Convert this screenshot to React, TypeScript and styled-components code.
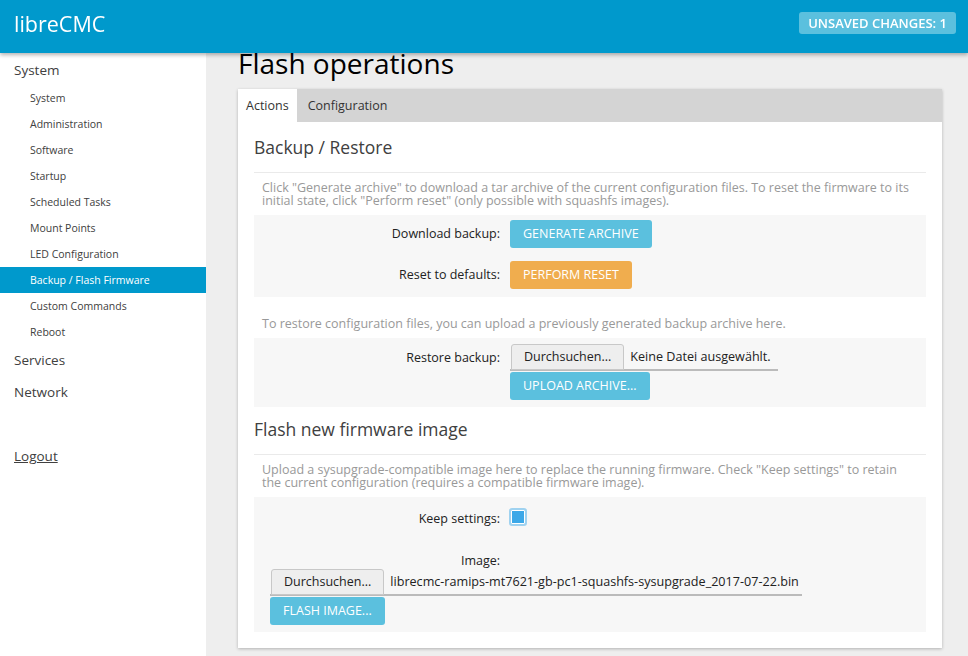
import React from "react";
import styled, { createGlobalStyle } from "styled-components";

const GlobalStyle = createGlobalStyle`
  html, body { margin: 0; padding: 0; background: #eeeeee; }
  body { font-family: "Open Sans", "Liberation Sans", sans-serif; color: #404040; }
  * { box-sizing: border-box; }
`;

const Header = styled.header`
  position: fixed;
  top: 0; left: 0; right: 0;
  height: 53px;
  background: #0099cc;
  box-shadow: 0 2px 4px rgba(0,0,0,0.3);
  display: flex;
  align-items: flex-start;
  justify-content: space-between;
  padding: 0 12px 0 14px;
  z-index: 10;
`;

const Brand = styled.div`
  color: #fff;
  font-size: 21.5px;
  line-height: 47px;
`;

const Badge = styled.div`
  background: #5bc0de;
  color: #fff;
  font-weight: 600;
  font-size: 13px;
  border-radius: 3px;
  height: 22px;
  line-height: 22px;
  padding: 0 9px;
  margin-top: 12px;
  font-stretch: 90%;
`;

const Shell = styled.div`
  display: flex;
  min-height: 656px;
`;

const Sidebar = styled.nav`
  width: 206px;
  flex: none;
  background: #fff;
  padding-top: 58px;
`;

const TopItem = styled.div<{ $gap?: number }>`
  font-size: 13.5px;
  color: #404040;
  padding-left: 14px;
  height: 32px;
  line-height: 24px;
  margin-top: ${(p) => p.$gap ?? 0}px;
  text-decoration: ${(p) => (p.$gap ? "underline" : "none")};
`;

const SubList = styled.div`
  margin-top: -5px;
  margin-bottom: 3px;
`;

const SubItem = styled.div<{ $active?: boolean }>`
  font-size: 10.5px;
  height: 26px;
  line-height: 26px;
  padding-left: 30px;
  color: ${(p) => (p.$active ? "#fff" : "#404040")};
  background: ${(p) => (p.$active ? "#0099cc" : "transparent")};
`;

const Main = styled.main`
  flex: 1;
  padding: 0 26px 0 32px;
`;

const Title = styled.h1`
  font-weight: 400;
  font-size: 28px;
  color: #000;
  margin: 0;
  padding-top: 43px;
  line-height: 40px;
  height: 89px;
`;

const Card = styled.div`
  background: #fff;
  box-shadow: 0 1px 3px rgba(0,0,0,0.25);
`;

const Tabs = styled.div`
  display: flex;
  height: 33px;
  background: #d4d4d4;
`;

const Tab = styled.div<{ $active?: boolean }>`
  font-size: 12.5px;
  line-height: 33px;
  padding: 0 ${(p) => (p.$active ? 8 : 11)}px;
  background: ${(p) => (p.$active ? "#fff" : "transparent")};
  color: #333;
`;

const CardBody = styled.div`
  padding: 10px 16px 16px;
`;

const SectionTitle = styled.h3<{ $top?: number }>`
  font-weight: 400;
  font-size: 17.5px;
  color: #404040;
  margin: ${(p) => p.$top ?? 0}px 0 0;
  line-height: 30px;
  padding-bottom: 10px;
  border-bottom: 1px solid #eaeaea;
`;

const Desc = styled.div<{ $top?: number }>`
  font-size: 12.5px;
  color: #999;
  line-height: 13px;
  padding: ${(p) => p.$top ?? 8}px 12px 8px 8px;
`;

const Box = styled.div<{ $pt?: number; $pb?: number }>`
  background: #f7f7f7;
  padding: ${(p) => p.$pt ?? 5}px 0 ${(p) => p.$pb ?? 8}px;
  display: flex;
  flex-direction: column;
`;

const Row = styled.div<{ $gap?: number }>`
  display: grid;
  grid-template-columns: 246px 1fr;
  column-gap: 10px;
  align-items: start;
  margin-top: ${(p) => p.$gap ?? 0}px;
`;

const Label = styled.div<{ $lh?: number }>`
  text-align: right;
  font-size: 12.5px;
  line-height: ${(p) => p.$lh ?? 28}px;
  color: #222;
`;

const Btn = styled.div<{ $color: string }>`
  display: inline-block;
  background: ${(p) => p.$color};
  color: #fff;
  font-size: 12.5px;
  text-transform: uppercase;
  border-radius: 3px;
  height: 28px;
  line-height: 28px;
  padding: 0 13px;
  justify-self: start;
`;

const FileWrap = styled.div`
  display: flex;
  flex-direction: column;
  align-items: flex-start;
  gap: 1px;
`;

const FileInput = styled.div<{ $w: number }>`
  display: flex;
  align-items: flex-start;
  width: ${(p) => p.$w}px;
  border-bottom: 2px solid #bbb;
  height: 27px;
`;

const FileBtn = styled.div`
  height: 26px;
  line-height: 24px;
  margin-left: 1px;
  padding: 0 12px;
  background: #eeeeee;
  border: 1px solid #c8c8c8;
  border-radius: 3px 3px 0 0;
  font-size: 12.5px;
  color: #222;
`;

const FileName = styled.div`
  font-size: 12.6px;
  line-height: 26px;
  color: #222;
  padding-left: 6px;
  white-space: nowrap;
`;

const Check = styled.div`
  width: 18px;
  height: 18px;
  margin-top: 3px;
  margin-left: -1px;
  border: 2px solid #9fd2f0;
  border-radius: 3px;
  background: #3ca8e8;
  box-shadow: inset 0 0 0 1px #fff;
`;

const ImageBlock = styled.div`
  padding-left: 16px;
`;

const subItems = [
  "System",
  "Administration",
  "Software",
  "Startup",
  "Scheduled Tasks",
  "Mount Points",
  "LED Configuration",
  "Backup / Flash Firmware",
  "Custom Commands",
  "Reboot",
];

export default function App() {
  return (
    <>
      <GlobalStyle />
      <Header>
        <Brand>libreCMC</Brand>
        <Badge>UNSAVED CHANGES: 1</Badge>
      </Header>
      <Shell>
        <Sidebar>
          <TopItem>System</TopItem>
          <SubList>
            {subItems.map((s) => (
              <SubItem key={s} $active={s === "Backup / Flash Firmware"}>
                {s}
              </SubItem>
            ))}
          </SubList>
          <TopItem>Services</TopItem>
          <TopItem>Network</TopItem>
          <TopItem $gap={32}>Logout</TopItem>
        </Sidebar>
        <Main>
          <Title>Flash operations</Title>
          <Card>
            <Tabs>
              <Tab $active>Actions</Tab>
              <Tab>Configuration</Tab>
            </Tabs>
            <CardBody>
              <SectionTitle>Backup / Restore</SectionTitle>
              <Desc>
                Click "Generate archive" to download a tar archive of the current configuration files. To reset the
                firmware to its initial state, click "Perform reset" (only possible with squashfs images).
              </Desc>
              <Box>
                <Row>
                  <Label>Download backup:</Label>
                  <Btn $color="#5bc0de">Generate archive</Btn>
                </Row>
                <Row $gap={13}>
                  <Label>Reset to defaults:</Label>
                  <Btn $color="#f0ad4e">Perform reset</Btn>
                </Row>
              </Box>
              <Desc $top={20}>
                To restore configuration files, you can upload a previously generated backup archive here.
              </Desc>
              <Box $pt={6} $pb={7}>
                <Row>
                  <Label>Restore backup:</Label>
                  <FileWrap>
                    <FileInput $w={268}>
                      <FileBtn>Durchsuchen...</FileBtn>
                      <FileName>Keine Datei ausgewählt.</FileName>
                    </FileInput>
                    <Btn $color="#5bc0de">Upload archive...</Btn>
                  </FileWrap>
                </Row>
              </Box>
              <SectionTitle $top={7}>Flash new firmware image</SectionTitle>
              <Desc>
                Upload a sysupgrade-compatible image here to replace the running firmware. Check "Keep settings" to
                retain the current configuration (requires a compatible firmware image).
              </Desc>
              <Box $pt={8} $pb={7}>
                <Row>
                  <Label>Keep settings:</Label>
                  <Check />
                </Row>
                <Row $gap={20}>
                  <Label $lh={16}>Image:</Label>
                </Row>
                <ImageBlock>
                  <FileWrap>
                    <FileInput $w={532}>
                      <FileBtn>Durchsuchen...</FileBtn>
                      <FileName>librecmc-ramips-mt7621-gb-pc1-squashfs-sysupgrade_2017-07-22.bin</FileName>
                    </FileInput>
                    <Btn $color="#5bc0de">Flash image...</Btn>
                  </FileWrap>
                </ImageBlock>
              </Box>
            </CardBody>
          </Card>
        </Main>
      </Shell>
    </>
  );
}
